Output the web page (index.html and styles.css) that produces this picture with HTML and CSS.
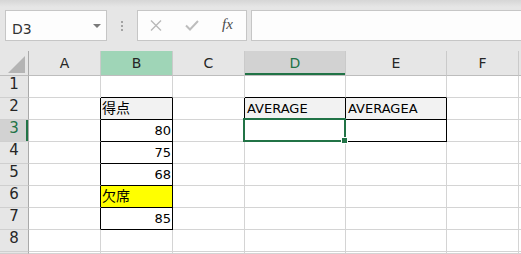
FILE: index.html
```html
<!DOCTYPE html>
<html lang="ja">
<head>
  <meta charset="UTF-8">
  <title>Book1 - Excel</title>
  <link rel="stylesheet" href="styles.css">
</head>
<body>

<!-- Barre de formule -->
<div class="toolbar">
  <div class="name-box">
    <span class="name">D3</span>
    <span class="arrow"></span>
  </div>
  <div class="grip"><i></i><i></i><i></i></div>
  <div class="fx-buttons">
    <svg class="ico-x" width="12" height="11" viewBox="0 0 12 11">
      <path d="M1 0.5 L11 10.5 M11 0.5 L1 10.5" stroke="#b9b9b9" stroke-width="1.4" fill="none"/>
    </svg>
    <svg class="ico-ok" width="14" height="11" viewBox="0 0 14 11">
      <path d="M1 5.5 L5 9.5 L13 1" stroke="#bdbdbd" stroke-width="2" fill="none"/>
    </svg>
    <span class="fx">fx</span>
  </div>
  <div class="formula-bar"></div>
</div>

<!-- Feuille -->
<div class="sheet">
  <div class="corner">
    <svg width="17" height="17" viewBox="0 0 17 17"><path d="M17 0 L17 17 L0 17 Z" fill="#b4b4b4"/></svg>
  </div>
  <div class="col-head">A</div>
  <div class="col-head col-picked">B</div>
  <div class="col-head">C</div>
  <div class="col-head col-active">D</div>
  <div class="col-head">E</div>
  <div class="col-head">F</div>
  <div class="col-head last"></div>

  <div class="row-head">1</div>
  <div class="cell"></div>
  <div class="cell b"></div>
  <div class="cell"></div>
  <div class="cell b"></div>
  <div class="cell b"></div>
  <div class="cell"></div>
  <div class="cell last"></div>

  <div class="row-head">2</div>
  <div class="cell r"></div>
  <div class="cell r b title jp">得点</div>
  <div class="cell r"></div>
  <div class="cell r b title">AVERAGE</div>
  <div class="cell r b title">AVERAGEA</div>
  <div class="cell"></div>
  <div class="cell last"></div>

  <div class="row-head row-active">3</div>
  <div class="cell r"></div>
  <div class="cell r b num">80</div>
  <div class="cell r"></div>
  <div class="cell r b current"><span class="sel"><span class="handle"></span></span></div>
  <div class="cell r b"></div>
  <div class="cell"></div>
  <div class="cell last"></div>

  <div class="row-head">4</div>
  <div class="cell r"></div>
  <div class="cell r b num">75</div>
  <div class="cell"></div>
  <div class="cell"></div>
  <div class="cell"></div>
  <div class="cell"></div>
  <div class="cell last"></div>

  <div class="row-head">5</div>
  <div class="cell r"></div>
  <div class="cell r b num">68</div>
  <div class="cell"></div>
  <div class="cell"></div>
  <div class="cell"></div>
  <div class="cell"></div>
  <div class="cell last"></div>

  <div class="row-head">6</div>
  <div class="cell r"></div>
  <div class="cell r b absent jp">欠席</div>
  <div class="cell"></div>
  <div class="cell"></div>
  <div class="cell"></div>
  <div class="cell"></div>
  <div class="cell last"></div>

  <div class="row-head">7</div>
  <div class="cell r"></div>
  <div class="cell r b num">85</div>
  <div class="cell"></div>
  <div class="cell"></div>
  <div class="cell"></div>
  <div class="cell"></div>
  <div class="cell last"></div>

  <div class="row-head">8</div>
  <div class="cell"></div>
  <div class="cell"></div>
  <div class="cell"></div>
  <div class="cell"></div>
  <div class="cell"></div>
  <div class="cell"></div>
  <div class="cell last"></div>

  <!-- Ligne 9 : seul le haut dépasse du cadre -->
  <div class="row-head"></div>
  <div class="cell"></div>
  <div class="cell"></div>
  <div class="cell"></div>
  <div class="cell"></div>
  <div class="cell"></div>
  <div class="cell"></div>
  <div class="cell last"></div>
</div>

</body>
</html>
```

FILE: styles.css
```css
/* Page */
body {
  margin: 0;
  width: 521px;
  height: 254px;
  overflow: hidden;
  background: #fff;
  font-family: "DejaVu Sans", "Noto Sans CJK JP", sans-serif;
}
/* Barre du haut */
.toolbar {
  display: flex;
  align-items: flex-start;
  height: 51px;
  box-sizing: border-box;
  padding: 10px 0 0 5px;
  background: linear-gradient(#d6d6d6, #e6e6e6 7px);
}
.name-box {
  width: 102px;
  height: 31px;
  box-sizing: border-box;
  border: 1px solid #c6c6c6;
  background: #fdfdfd;
  display: flex;
  align-items: center;
  justify-content: space-between;
  padding: 0 5px 0 6px;
}
.name {
  margin-top: 6px;
  font-size: 14px;
  color: #333;
}
.arrow {
  width: 0;
  height: 0;
  border-left: 4px solid transparent;
  border-right: 4px solid transparent;
  border-top: 4px solid #7a7a7a;
}
.grip {
  width: 30px;
  height: 31px;
  display: flex;
  flex-direction: column;
  align-items: center;
  justify-content: center;
  gap: 2px;
}
.grip i {
  width: 2px;
  height: 2px;
  background: #a3a3a3;
}
.fx-buttons {
  width: 110px;
  height: 31px;
  box-sizing: border-box;
  border: 1px solid #c6c6c6;
  background: #fdfdfd;
  display: flex;
  align-items: center;
  gap: 23px;
  padding-left: 12px;
}
.fx {
  font-family: "Liberation Serif", serif;
  font-style: italic;
  font-size: 15px;
  line-height: 1;
  color: #4a4a4a;
  margin-top: -2px;
}
.formula-bar {
  flex: 1;
  height: 31px;
  box-sizing: border-box;
  margin-left: 4px;
  border: 1px solid #c6c6c6;
  border-right: none;
  background: #fdfdfd;
}
/* Grille */
.sheet {
  display: grid;
  grid-template-columns: 29px 72px 72px 72px 101px 101px 72px 1fr;
  grid-template-rows: 25px repeat(8, 22px) 2px;
}
.sheet > div {
  box-sizing: border-box;
}
.corner {
  background: #e6e6e6;
  border-right: 1px solid #a9a9a9;
  border-bottom: 1px solid #bdbdbd;
  display: flex;
  justify-content: flex-end;
  align-items: flex-end;
  padding: 0 3px 2px 0;
}
.corner svg {
  display: block;
}
.col-head {
  background: #e6e6e6;
  border-right: 1px solid #cacaca;
  border-bottom: 1px solid #bdbdbd;
  text-align: center;
  font-size: 14px;
  line-height: 24px;
  color: #262626;
}
.col-picked {
  background: #9fd5b7;
}
.col-active {
  background: #d2d2d2;
  color: #217346;
  box-shadow: inset 0 -2px 0 #217346;
}
.row-head {
  background: #e6e6e6;
  border-right: 1px solid #a9a9a9;
  border-bottom: 1px solid #cfcfcf;
  text-align: center;
  font-size: 15px;
  line-height: 16px;
  color: #262626;
}
.row-active {
  background: #d2d2d2;
  color: #217346;
  box-shadow: inset -2px 0 0 #217346;
}
.cell {
  border-right: 1px solid #d4d4d4;
  border-bottom: 1px solid #d4d4d4;
  font-size: 13px;
  line-height: 21px;
  padding: 0 1px 0 2px;
  white-space: nowrap;
  color: #000;
}
.last {
  border-right: none;
}
/* Bordures noires */
.cell.r {
  border-right-color: #000;
}
.cell.b {
  border-bottom-color: #000;
}
.title {
  background: #f2f2f2;
}
.jp {
  font-size: 14px;
  padding-left: 1px;
}
.num {
  text-align: right;
}
.absent {
  background: #ffff00;
}
/* Cellule active D3 */
.current {
  position: relative;
}
.sel {
  position: absolute;
  top: -2px;
  left: -2px;
  right: -1px;
  bottom: -1px;
  border: 2px solid #217346;
}
.handle {
  position: absolute;
  right: -4px;
  bottom: -4px;
  width: 5px;
  height: 5px;
  background: #217346;
  border: 1px solid #fff;
}
```
